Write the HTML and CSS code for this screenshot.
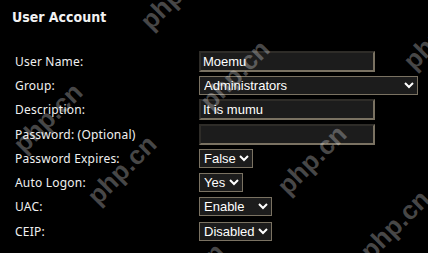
FILE: index.html
```html
<!DOCTYPE html>
<html>

<head>
    <meta charset="UTF-8">
    <title>User Account</title>
    <link rel="stylesheet" href="styles.css">
</head>

<body>
    <div class="panel">
        <h2 class="title">User Account</h2>
        <div class="form">
            <label>User Name:</label>
            <div><input class="field" type="text" value="Moemu"></div>

            <label>Group:</label>
            <div>
                <select class="pick wide">
                    <option>Administrators</option>
                    <option>Users</option>
                </select>
            </div>

            <label>Description:</label>
            <div><input class="field" type="text" value="It is mumu"></div>

            <label>Password: (Optional)</label>
            <div><input class="field" type="password" value=""></div>

            <label>Password Expires:</label>
            <div>
                <select class="pick">
                    <option>False</option>
                    <option>True</option>
                </select>
            </div>

            <label>Auto Logon:</label>
            <div>
                <select class="pick">
                    <option>Yes</option>
                    <option>No</option>
                </select>
            </div>

            <label>UAC:</label>
            <div>
                <select class="pick">
                    <option>Enable</option>
                    <option>Disabled</option>
                </select>
            </div>

            <label>CEIP:</label>
            <div>
                <select class="pick">
                    <option selected>Disabled</option>
                    <option>Enable</option>
                </select>
            </div>
        </div>
    </div>

    <!-- watermark layer -->
    <div class="marks">
        <span class="mark m1">php.cn</span>
        <span class="mark m2">php.cn</span>
        <span class="mark m3">php.cn</span>
        <span class="mark m4">php.cn</span>
        <span class="mark m5">php.cn</span>
        <span class="mark m6">php.cn</span>
        <span class="mark m7">php.cn</span>
        <span class="mark m8">php.cn</span>
    </div>
</body>

</html>
```

FILE: styles.css
```css
html,
body {
    margin: 0;
    padding: 0;
    background-color: #000;
    color: #fff;
}

body {
    position: relative;
    width: 428px;
    height: 253px;
    overflow: hidden;
}

.panel {
    padding: 9px 0 0 12px;
}

.title {
    margin: 0;
    font-family: "DejaVu Sans Condensed", "DejaVu Sans", sans-serif;
    font-stretch: condensed;
    font-size: 14px;
    font-weight: bold;
    line-height: 17px;
    color: #f2f2f2;
}

.form {
    display: grid;
    grid-template-columns: 184px auto;
    grid-auto-rows: 24.3px;
    align-items: center;
    margin-top: 23px;
    padding-left: 3px;
}

.form label {
    font-family: "Noto Sans", sans-serif;
    font-size: 12px;
    letter-spacing: 0.2px;
    color: #f0f0f0;
}

.form div {
    display: flex;
    align-items: center;
}

.field {
    box-sizing: border-box;
    width: 176px;
    height: 21px;
    margin: 0;
    padding: 1px 2px;
    font-family: "Liberation Sans", Arial, sans-serif;
    font-size: 13px;
    color: #fff;
    background-color: #1c1c1c;
    border-style: solid;
    border-width: 2px;
    border-color: #2e2c28 #7a7262 #7a7262 #2e2c28;
    outline: none;
}

.pick {
    color-scheme: dark;
    height: 19px;
    margin: 0;
    font-family: "Liberation Sans", Arial, sans-serif;
    font-size: 13px;
    color: #fff;
    background-color: #1c1c1c;
    border: 1px solid #7a7262;
    border-radius: 0;
}

.wide {
    width: 219px;
}

.marks {
    position: absolute;
    top: 0;
    left: 0;
    width: 428px;
    height: 253px;
    pointer-events: none;
}

.mark {
    position: absolute;
    font-family: "Liberation Sans", Arial, sans-serif;
    font-size: 26px;
    font-weight: bold;
    color: rgba(255, 255, 255, 0.28);
    white-space: nowrap;
    transform: translate(-50%, -50%) rotate(-45deg);
}

.m1 { left: 175px; top: -5px; }
.m2 { left: 235px; top: 75px; }
.m3 { left: 48px;  top: 118px; }
.m4 { left: 122px; top: 170px; }
.m5 { left: 312px; top: 160px; }
.m6 { left: 395px; top: 225px; }
.m7 { left: 438px; top: 35px; }
.m8 { left: 190px; top: 278px; }
```
